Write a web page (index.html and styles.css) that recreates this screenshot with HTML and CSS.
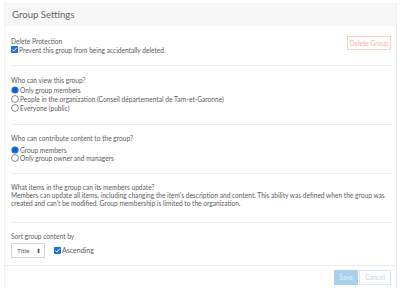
FILE: index.html
```html
<!DOCTYPE html>
<html>
<head>
<meta charset="utf-8">
<link rel="stylesheet" href="styles.css">
</head>
<body>
<div class="card">
  <div class="header">Group Settings</div>
  <div class="content">
    <div class="section s1">
      <div class="col">
        <div class="label">Delete Protection</div>
        <div class="opt">
          <svg class="cb" viewBox="0 0 8 8"><rect x="0" y="0" width="8" height="8" rx="0.8" fill="#1a73d1"/><path d="M1.6 4.2 L3.3 5.8 L6.5 2" stroke="#fff" stroke-width="1.1" fill="none"/></svg>
          <span>Prevent this group from being accidentally deleted.</span>
        </div>
      </div>
      <button class="btn-danger">Delete Group</button>
    </div>
    <div class="section s2">
      <div class="label">Who can view this group?</div>
      <div class="opts">
        <div class="opt"><svg class="radio" viewBox="0 0 8 8"><circle cx="4" cy="4" r="3.6" fill="#1a73d1"/><circle cx="4" cy="4" r="2.2" fill="#0f62c8"/></svg><span>Only group members</span></div>
        <div class="opt"><svg class="radio" viewBox="0 0 8 8"><circle cx="4" cy="4" r="3.4" fill="#fff" stroke="#555" stroke-width="0.7"/></svg><span>People in the organization (Conseil départemental de Tarn-et-Garonne)</span></div>
        <div class="opt"><svg class="radio" viewBox="0 0 8 8"><circle cx="4" cy="4" r="3.4" fill="#fff" stroke="#555" stroke-width="0.7"/></svg><span>Everyone (public)</span></div>
      </div>
    </div>
    <div class="section s3">
      <div class="label">Who can contribute content to the group?</div>
      <div class="opts">
        <div class="opt"><svg class="radio" viewBox="0 0 8 8"><circle cx="4" cy="4" r="3.6" fill="#1a73d1"/><circle cx="4" cy="4" r="2.2" fill="#0f62c8"/></svg><span>Group members</span></div>
        <div class="opt"><svg class="radio" viewBox="0 0 8 8"><circle cx="4" cy="4" r="3.4" fill="#fff" stroke="#555" stroke-width="0.7"/></svg><span>Only group owner and managers</span></div>
      </div>
    </div>
    <div class="section s4">
      <div class="label">What items in the group can its members update?</div>
      <p class="para">Members can update all items, including changing the item's description and content. This ability was defined when the group was created and can't be modified. Group membership is limited to the organization.</p>
    </div>
    <div class="section s5">
      <div class="label">Sort group content by</div>
      <div class="sortrow">
        <div class="select"><span>Title</span><span class="arrows">&#x2B0D;</span></div>
        <div class="opt">
          <svg class="cb" viewBox="0 0 8 8"><rect x="0" y="0" width="8" height="8" rx="0.8" fill="#1a73d1"/><path d="M1.6 4.2 L3.3 5.8 L6.5 2" stroke="#fff" stroke-width="1.1" fill="none"/></svg>
          <span class="asc">Ascending</span>
        </div>
      </div>
    </div>
  </div>
  <div class="footer">
    <button class="btn-save">Save</button>
    <button class="btn-cancel">Cancel</button>
  </div>
</div>
</body>
</html>
```
FILE: styles.css
```css
* { box-sizing: border-box; }
html, body { margin: 0; padding: 0; background: #fff; }
body {
  font-family: Lato, "Open Sans", sans-serif;
  font-size: 6.6px;
  color: #5c5c5c;
  height: 288px;
  overflow: hidden;
}
.card {
  margin: 3px 3px 0 4px;
  border-left: 1px solid #f2f2f2;
  border-right: 1px solid #eeeeee;
  height: 285px;
}
.header {
  height: 23px;
  background: #f7f7f7;
  padding-left: 7px;
  font-size: 9.6px;
  line-height: 23px;
  color: #666;
}
.content { padding: 0 4px 0 6px; }
.section { border-bottom: 1px solid #ececec; }
.label { line-height: 8.5px; }
.opt { display: flex; align-items: center; height: 8.6px; }
.cb { width: 7px; height: 7px; margin-right: 1px; flex: none; }
.radio { width: 8px; height: 8px; margin-right: 1px; flex: none; }
.s1 { display: flex; justify-content: space-between; align-items: flex-start; padding: 10px 0 11px; }
.s1 .col { padding-top: 1px; }
.btn-danger {
  font: inherit; font-size: 6.6px; color: #f5b0a6; background: #fff;
  border: 1px solid #f8d0ca; height: 14px; width: 44px; padding: 0; margin-right: 1px;
}
.s2 { padding: 9.5px 0 12px; }
.s2 .opts { margin-top: 2px; }
.s3 { padding: 9px 0 10px; }
.s3 .opts { margin-top: 3px; }
.s4 { padding: 9px 0 14.5px; }
.para { margin: 0; line-height: 8px; }
.s5 { padding: 9px 0 7px; border-bottom: none; }
.sortrow { display: flex; align-items: center; margin-top: 2.5px; }
.select {
  width: 34px; height: 15px; border: 1px solid #d4d4d4;
  display: flex; justify-content: space-between; align-items: center;
  padding: 0 3px 0 5px; margin-right: 9px; font-size: 6.4px;
}
.arrows { font-size: 6px; color: #555; font-family: "DejaVu Sans", sans-serif; }
.asc { font-size: 7px; }
.footer {
  border-top: 1px solid #ececec;
  display: flex; justify-content: flex-end; padding: 4px 5px 0 0;
}
.footer button { font: inherit; font-size: 6.6px; height: 15px; padding: 0; }
.btn-save { width: 24px; background: #a9d1ec; border: 1px solid #a9d1ec; color: #e6f2fa; }
.btn-cancel { width: 32px; background: #fff; border: 1px solid #d3e6f4; color: #b9d7ee; margin-left: 1px; }
```
